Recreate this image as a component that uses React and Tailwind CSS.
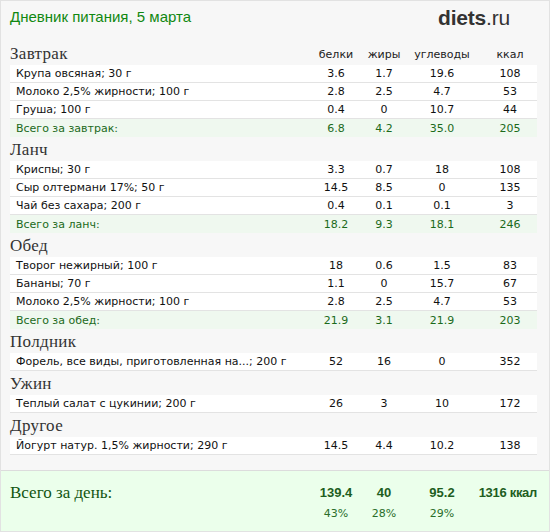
const sections = [
  {
    title: "Завтрак",
    head: true,
    rows: [
      ["Крупа овсяная; 30 г", "3.6", "1.7", "19.6", "108"],
      ["Молоко 2,5% жирности; 100 г", "2.8", "2.5", "4.7", "53"],
      ["Груша; 100 г", "0.4", "0", "10.7", "44"],
    ],
    total: ["Всего за завтрак:", "6.8", "4.2", "35.0", "205"],
  },
  {
    title: "Ланч",
    rows: [
      ["Криспы; 30 г", "3.3", "0.7", "18", "108"],
      ["Сыр олтермани 17%; 50 г", "14.5", "8.5", "0", "135"],
      ["Чай без сахара; 200 г", "0.4", "0.1", "0.1", "3"],
    ],
    total: ["Всего за ланч:", "18.2", "9.3", "18.1", "246"],
  },
  {
    title: "Обед",
    rows: [
      ["Творог нежирный; 100 г", "18", "0.6", "1.5", "83"],
      ["Бананы; 70 г", "1.1", "0", "15.7", "67"],
      ["Молоко 2,5% жирности; 100 г", "2.8", "2.5", "4.7", "53"],
    ],
    total: ["Всего за обед:", "21.9", "3.1", "21.9", "203"],
  },
  {
    title: "Полдник",
    rows: [["Форель, все виды, приготовленная на...; 200 г", "52", "16", "0", "352"]],
  },
  {
    title: "Ужин",
    rows: [["Теплый салат с цукинии; 200 г", "26", "3", "10", "172"]],
  },
  {
    title: "Другое",
    rows: [["Йогурт натур. 1,5% жирности; 290 г", "14.5", "4.4", "10.2", "138"]],
  },
]

const grid = "grid grid-cols-[300px_52px_44px_72px_59px] items-center"
const sans = "font-['DejaVu_Sans',Verdana,sans-serif]"
const serif = "font-['Liberation_Serif',serif]"

function Row({ cells, total }) {
  return (
    <div
      className={
        grid +
        " h-[18px] text-[11px] leading-none " +
        (total ? "bg-[#eff8ef] text-[#1b6a1b]" : "bg-white text-[#111] border-b border-[#e3e3e3]")
      }
    >
      <div className="pl-[6px] whitespace-nowrap">{cells[0]}</div>
      <div className="text-center">{cells[1]}</div>
      <div className="text-center">{cells[2]}</div>
      <div className="text-center">{cells[3]}</div>
      <div className="text-center pl-[5px]">{cells[4]}</div>
    </div>
  )
}

export default function App() {
  return (
    <div className={"w-[550px] h-[532px] bg-[#f7f7f7] border border-[#e2e2e2] flex flex-col " + sans}>
      <div className="flex items-center justify-between h-[33px] pl-[9px] pr-[39px]">
        <span className="font-['Liberation_Sans',Arial,sans-serif] text-[15px] text-[#118811]">
          Дневник питания, 5 марта
        </span>
        <span className="font-['Liberation_Sans',Arial,sans-serif] text-[21px] text-[#333] tracking-[-0.2px]">
          <b>diets</b>.ru
        </span>
      </div>

      <div className="pl-[9px] pr-[12px] mt-[11px]">
        {sections.map((s, i) => (
          <div key={s.title}>
            <div className={grid + " h-[20px] " + (i > 0 ? "mt-[4px]" : "")}>
              <div className={serif + " text-[17px] leading-[18px] pb-[2px] text-[#333] tracking-[0.3px]"}>{s.title}</div>
              {s.head && (
                <>
                  <div className="text-center text-[11px] text-[#222]">белки</div>
                  <div className="text-center text-[11px] text-[#222]">жиры</div>
                  <div className="text-center text-[11px] text-[#222]">углеводы</div>
                  <div className="text-center text-[11px] text-[#222] pl-[5px]">ккал</div>
                </>
              )}
            </div>
            {s.rows.map((r) => (
              <Row key={r[0]} cells={r} />
            ))}
            {s.total && <Row cells={s.total} total />}
          </div>
        ))}
      </div>

      <div className="mt-auto h-[61px] bg-[#ebffeb] border-t border-[#dcdcdc] pl-[9px] pr-[12px] pt-[9px]">
        <div className={grid}>
          <div className={serif + " text-[17px] text-[#115511]"}>Всего за день:</div>
          <div className="text-center font-['Liberation_Sans',Arial,sans-serif] font-bold text-[13px] text-[#1e5e1e]">139.4</div>
          <div className="text-center font-['Liberation_Sans',Arial,sans-serif] font-bold text-[13px] text-[#1e5e1e]">40</div>
          <div className="text-center font-['Liberation_Sans',Arial,sans-serif] font-bold text-[13px] text-[#1e5e1e]">95.2</div>
          <div className="text-right whitespace-nowrap font-['Liberation_Sans',Arial,sans-serif] font-bold text-[13px] text-[#1e5e1e] tracking-[-0.3px]">1316 ккал</div>
        </div>
        <div className={grid + " text-[11px] text-[#2a6e2a]"}>
          <div></div>
          <div className="text-center">43%</div>
          <div className="text-center">28%</div>
          <div className="text-center">29%</div>
          <div></div>
        </div>
      </div>
    </div>
  )
}
